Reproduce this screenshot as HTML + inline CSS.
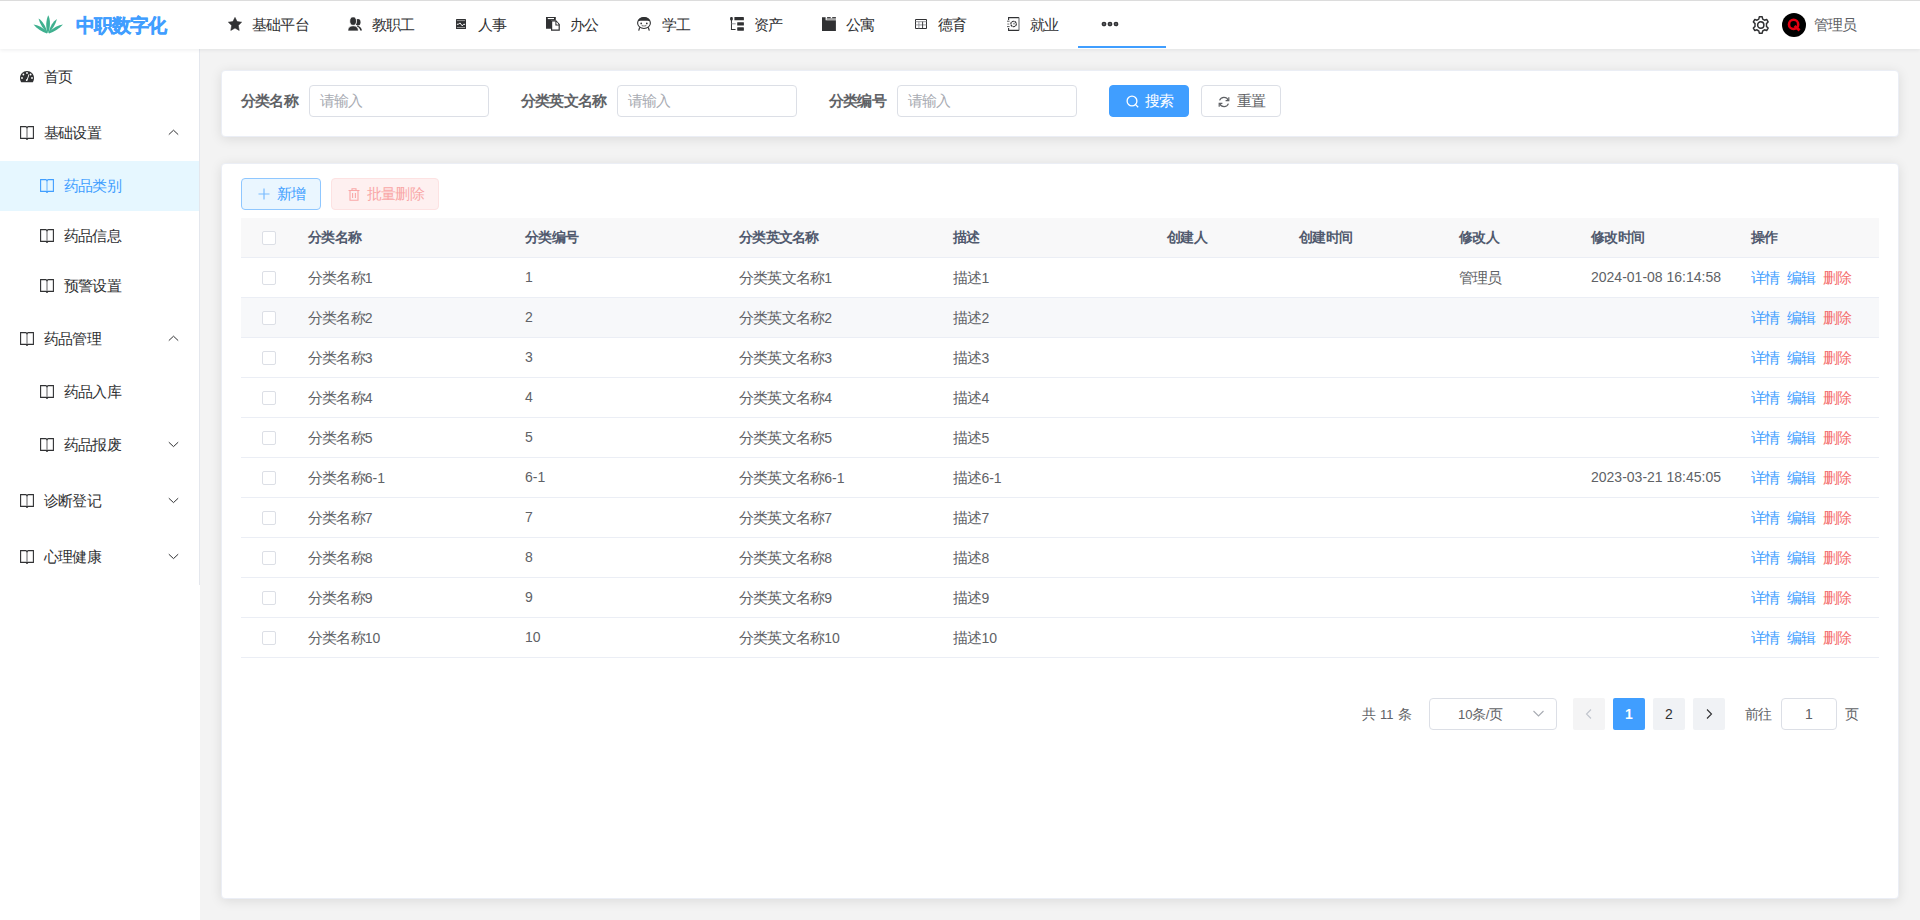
<!DOCTYPE html>
<html><head><meta charset="utf-8"><style>
*{box-sizing:border-box;margin:0;padding:0}
html,body{width:1920px;height:920px;overflow:hidden}
body{font-family:"Liberation Sans",sans-serif;font-size:14px;color:#606266;background:#f3f3f3;position:relative}
.abs{position:absolute}
#topline{left:0;top:0;width:1920px;height:1px;background:#dcdcdc;z-index:4}
#header{left:0;top:0;width:1920px;height:49px;background:#fff;box-shadow:0 1px 4px rgba(0,21,41,.08);z-index:3}
#logo-t{left:76px;top:15px;font-size:18px;font-weight:bold;-webkit-text-stroke:0.35px #409eff;color:#409eff;line-height:22px;white-space:nowrap}
.navt{position:absolute;top:1px;height:48px;line-height:48px;color:#303133;white-space:nowrap}
#underline{left:1078px;top:46px;width:88px;height:2px;background:#409eff}
#sidebg{left:0;top:49px;width:200px;height:871px;background:#fff;z-index:1}
#side{left:0;top:49px;width:200px;height:536px;background:#fff;border-right:1px solid #e4e7ed;z-index:2}
.mi{position:absolute;left:0;width:199px}
.mt{position:absolute;top:0;white-space:nowrap}
.card{position:absolute;background:#fff;border-radius:4px;border:1px solid #ebeef5;box-shadow:0 2px 12px 0 rgba(0,0,0,.1)}
.lbl{position:absolute;font-weight:bold;color:#606266;line-height:32px;white-space:nowrap}
.inp{position:absolute;height:32px;width:180px;border:1px solid #dcdfe6;border-radius:4px;background:#fff;color:#a8abb2;line-height:30px;padding-left:10px;white-space:nowrap}
.btn{position:absolute;height:32px;border-radius:4px;line-height:30px;white-space:nowrap;border:1px solid #dcdfe6}
.cb{position:absolute;width:14px;height:14px;border:1px solid #dcdfe6;border-radius:2px;background:#fff}
.th{position:absolute;height:40px;line-height:39px;font-size:13px;font-weight:bold;color:#515a6e;white-space:nowrap}
.td{position:absolute;height:40px;line-height:39px;color:#606266;white-space:nowrap}
.pt{position:absolute;height:32px;line-height:33px;font-size:13px;white-space:nowrap;color:#606266}
.pb{position:absolute;width:32px;height:32px;line-height:32px;border-radius:2px;text-align:center;color:#606266}

.c{font-size:1.0715em;letter-spacing:-0.0536em}

</style></head><body>
<div id="topline" class="abs"></div>
<div id="header" class="abs">
<svg class="abs" style="left:33px;top:14px" width="31" height="20" viewBox="0 0 31 20">
<g fill="#3fb08f">
<path d="M14.5 18.5 C12.5 13 13 6 15.2 1.2 C17.5 5 17.5 12 15.5 18.5 Z"/>
<path d="M13.8 18.8 C10.5 15 7 10.5 5.5 4.5 C9.5 7 12.5 12 14.5 18.5 Z"/>
<path d="M16.2 18.8 C19.5 15 22.5 10.5 24 5 C20 7.5 17.2 12 15.6 18.5 Z"/>
<path d="M14 19.5 C9 17.5 4 15 0.5 10.5 C5 10.8 10 13.5 14.6 18.6 Z"/>
<path d="M16 19.5 C21 17.5 26 15 30 10.5 C25.5 10.8 20.5 13.5 15.5 18.6 Z"/>
</g></svg>
<div id="logo-t" class="abs"><span class="c">中职数字化</span></div>
<div class="abs" style="left:228px;top:17px;line-height:0"><svg width="14" height="14" viewBox="0 0 14 14"><path fill="#303133" stroke="#303133" stroke-width="0.6" stroke-linejoin="round" d="M7 0.4 L9.1 4.6 L13.6 5.2 L10.3 8.4 L11.2 13.4 L7 11 L2.8 13.4 L3.7 8.4 L0.4 5.2 L4.9 4.6 Z"/></svg></div>
<div class="navt" style="left:252px"><span class="c">基础平台</span></div>
<div class="abs" style="left:348px;top:17px;line-height:0"><svg width="14" height="14" viewBox="0 0 14 14"><g fill="#303133"><ellipse cx="10" cy="5.3" rx="2.5" ry="3.2"/><path d="M9.2 8.6 C11.8 9.2 13.6 11 14 13.6 L12.2 13.6 C11.8 11.6 10.6 10.2 8.8 9.6 Z"/></g><g fill="#303133" stroke="#fff" stroke-width="0.9"><ellipse cx="5.1" cy="4.1" rx="3.4" ry="4.3"/><path d="M-0.3 14.1 C-0.3 10.6 1.6 8.7 5.1 8.7 C8.6 8.7 10.5 10.6 10.5 14.1 Z"/></g></svg></div>
<div class="navt" style="left:372px"><span class="c">教职工</span></div>
<div class="abs" style="left:456px;top:19px;line-height:0"><svg width="10" height="10" viewBox="0 0 10 10"><rect x="0" y="0" width="10" height="10" rx="0.6" fill="#303133"/><path d="M0.9 1.6 H9.1 M0.9 8.5 H9.1" stroke="#b0b0b0" stroke-width="0.8"/><polyline points="0.9,5.3 2.6,5.2 3.9,3.9 6.3,6.9 7.5,5.3 9.1,5.3" stroke="#fff" stroke-width="1" fill="none"/></svg></div>
<div class="navt" style="left:478px"><span class="c">人事</span></div>
<div class="abs" style="left:546px;top:17px;line-height:0"><svg width="14" height="14" viewBox="0 0 14 14"><path fill="#303133" d="M0 0 H9.8 V3.2 H5 V11.8 H0 Z"/><rect x="1.8" y="1" width="6.2" height="1.1" fill="#fff"/><path d="M5.6 3.9 H9.9 L13.2 7.4 V13.2 H5.6 Z" fill="#fff" stroke="#303133" stroke-width="1.2" stroke-linejoin="miter"/><path d="M10 3.9 V8 H13.2" fill="none" stroke="#303133" stroke-width="1.2"/><path d="M10.6 4.8 L12.4 7.2 H10.6 Z" fill="#fff"/></svg></div>
<div class="navt" style="left:570px"><span class="c">办公</span></div>
<div class="abs" style="left:637px;top:17px;line-height:0"><svg width="14" height="14" viewBox="0 0 14 14"><ellipse cx="7" cy="6" rx="6.4" ry="5.5" fill="none" stroke="#303133" stroke-width="1.1"/><path d="M0.9 4.2 C1.6 1.4 4 0.3 7 0.3 C10 0.3 12.4 1.4 13.1 4.2 C10.5 3.7 3.5 3.7 0.9 4.2 Z" fill="#303133"/><circle cx="4.2" cy="6.4" r="0.85" fill="#303133"/><circle cx="9.8" cy="6.4" r="0.85" fill="#303133"/><path d="M4.7 8.2 Q7 9.8 9.3 8.2" fill="none" stroke="#8a8a8a" stroke-width="1.1"/><path d="M2.7 10.4 L1.7 13.6 M11.3 10.4 L12.3 13.6" stroke="#303133" stroke-width="1.2"/></svg></div>
<div class="navt" style="left:662px"><span class="c">学工</span></div>
<div class="abs" style="left:730px;top:17px;line-height:0"><svg width="14" height="14" viewBox="0 0 14 14"><g fill="#303133"><rect x="0.1" y="0" width="2.7" height="3.5" rx="1"/><rect x="0.95" y="3" width="1" height="9.9"/><rect x="0.95" y="12" width="4.6" height="1"/><rect x="4.4" y="0" width="9.5" height="3.3" rx="0.4"/><rect x="7.2" y="5.2" width="6.7" height="3.4" rx="0.4"/><rect x="7.2" y="10.3" width="6.7" height="3.4" rx="0.4"/></g><rect x="1.5" y="6.3" width="4.2" height="1" fill="#909399"/></svg></div>
<div class="navt" style="left:754px"><span class="c">资产</span></div>
<div class="abs" style="left:822px;top:17px;line-height:0"><svg width="14" height="14" viewBox="0 0 14 14"><path fill="#303133" d="M0 0.2 H3.6 V3.2 H13.9 V13.9 H0 Z"/><rect x="4.6" y="1.1" width="9.3" height="2.1" fill="#a6a6a6"/><rect x="5.1" y="0.1" width="3.6" height="1.1" fill="#303133"/><rect x="10.2" y="0.1" width="3.7" height="1.1" fill="#303133"/></svg></div>
<div class="navt" style="left:846px"><span class="c">公寓</span></div>
<div class="abs" style="left:915px;top:19px;line-height:0"><svg width="12" height="10" viewBox="0 0 12 10"><path fill="none" stroke="#303133" stroke-width="1" d="M0.5 0.5 H11.5 V9.5 H0.5 Z"/><path stroke="#8d8f94" stroke-width="0.9" d="M0.5 2.7 H11.5 M0.5 5.9 H11.5 M3.9 2.7 V9.5"/><path stroke="#303133" stroke-width="0.9" d="M7.6 2.7 V9.5"/></svg></div>
<div class="navt" style="left:938px"><span class="c">德育</span></div>
<div class="abs" style="left:1007px;top:17px;line-height:0"><svg width="13" height="14" viewBox="0 0 13 14"><path d="M1.6 3 V0.6 H12 M12 13.4 H1.6 V11" fill="none" stroke="#303133" stroke-width="1.1"/><path d="M12 0.6 V13.4" stroke="#6b6d71" stroke-width="1.1"/><path d="M0 4.2 H2.6 M0 9.6 H2.6" stroke="#58595c" stroke-width="1"/><path d="M0.3 7.1 H2.3" stroke="#9a9a9a" stroke-width="1.4"/><circle cx="6.6" cy="7" r="2.75" fill="none" stroke="#303133" stroke-width="1.15" stroke-dasharray="2.2 0.5"/><circle cx="7" cy="6.7" r="0.9" fill="#8d8f94"/></svg></div>
<div class="navt" style="left:1030px"><span class="c">就业</span></div>
<svg class="abs" style="left:1101px;top:21px" width="18" height="6" viewBox="0 0 18 6"><g fill="#606266" stroke="#303133" stroke-width="1.3"><circle cx="3" cy="3" r="1.7"/><circle cx="9" cy="3" r="1.7"/><circle cx="15" cy="3" r="1.7"/></g></svg>
<div id="underline" class="abs"></div>
<svg class="abs" style="left:1751px;top:15px" width="19.5" height="20" viewBox="0 0 24 24" preserveAspectRatio="none"><path fill="none" stroke="#303133" stroke-width="1.8" stroke-linejoin="round" d="M10.2 2.2 H13.8 L14.4 5 C15.2 5.3 15.9 5.7 16.6 6.2 L19.3 5.3 L21.1 8.4 L19 10.3 C19.1 11.1 19.1 12.9 19 13.7 L21.1 15.6 L19.3 18.7 L16.6 17.8 C15.9 18.3 15.2 18.7 14.4 19 L13.8 21.8 H10.2 L9.6 19 C8.8 18.7 8.1 18.3 7.4 17.8 L4.7 18.7 L2.9 15.6 L5 13.7 C4.9 12.9 4.9 11.1 5 10.3 L2.9 8.4 L4.7 5.3 L7.4 6.2 C8.1 5.7 8.8 5.3 9.6 5 Z"/><circle cx="12" cy="12" r="3.9" fill="none" stroke="#303133" stroke-width="1.8"/></svg>
<svg class="abs" style="left:1782px;top:13px" width="24" height="24" viewBox="0 0 24 24"><circle cx="12" cy="12" r="12" fill="#000"/><circle cx="11.6" cy="11.4" r="4.6" fill="none" stroke="#e60012" stroke-width="2.6"/><path d="M12.5 13 L17.6 17.4" stroke="#e60012" stroke-width="2.8"/></svg>
<div class="navt" style="left:1814px;color:#606266"><span class="c">管理员</span></div>
</div>
<div id="sidebg" class="abs"></div>
<div id="side" class="abs">
<div class="mi" style="top:0px;height:56px;">
<div class="abs" style="left:20px;top:22px;line-height:0"><svg width="14" height="12" viewBox="0 0 14 12"><path fill="#303133" d="M7 0 C10.9 0 14 3.1 14 7 C14 8.6 13.6 10.2 12.8 11.2 L1.2 11.2 C0.4 10.2 0 8.6 0 7 C0 3.1 3.1 0 7 0 Z"/><g fill="#fff"><circle cx="7" cy="2" r="0.9"/><circle cx="3.4" cy="3.5" r="0.9"/><circle cx="10.6" cy="3.5" r="0.9"/><circle cx="2" cy="7" r="0.9"/><circle cx="12" cy="7" r="0.9"/><path d="M8.6 3.2 L9.4 3.6 L7.8 8.6 C7.9 9.4 7.4 10 6.8 10 C6.2 10 5.8 9.5 5.9 8.9 C6 8.4 6.5 8 7 8 Z"/></g></svg></div>
<div class="mt" style="left:44px;line-height:56px;color:#303133"><span class="c">首页</span></div>
</div>
<div class="mi" style="top:56px;height:56px;">
<div class="abs" style="left:20px;top:21px;line-height:0"><svg width="14" height="14" viewBox="0 0 14 14"><path fill="none" stroke="#303133" stroke-width="1.1" d="M5.8 0.6 H0.6 V12.4 H5.8 Q6.6 12.5 6.8 13.2 M8.2 0.6 H13.4 V12.4 H8.2 Q7.4 12.5 7.2 13.2 M5.8 0.6 Q6.6 0.7 6.8 1.5 M8.2 0.6 Q7.4 0.7 7.2 1.5"/><rect x="6.3" y="1.5" width="1.4" height="11.6" fill="#303133" opacity="0.55"/><rect x="6.2" y="1.2" width="1.6" height="1" fill="#303133"/><rect x="6.2" y="12.8" width="1.6" height="1" fill="#303133"/></svg></div>
<div class="mt" style="left:44px;line-height:56px;color:#303133"><span class="c">基础设置</span></div>
<div class="abs" style="left:168px;top:24px;line-height:0"><svg width="11" height="7" viewBox="0 0 11 7"><path d="M0.8 5.6 L5.5 1.2 L10.2 5.6" fill="none" stroke="#303133" stroke-width="1"/></svg></div>
</div>
<div class="mi" style="top:112px;height:50px;background:#e6f7ff;">
<div class="abs" style="left:40px;top:18px;line-height:0"><svg width="14" height="14" viewBox="0 0 14 14"><path fill="none" stroke="#409eff" stroke-width="1.1" d="M5.8 0.6 H0.6 V12.4 H5.8 Q6.6 12.5 6.8 13.2 M8.2 0.6 H13.4 V12.4 H8.2 Q7.4 12.5 7.2 13.2 M5.8 0.6 Q6.6 0.7 6.8 1.5 M8.2 0.6 Q7.4 0.7 7.2 1.5"/><rect x="6.3" y="1.5" width="1.4" height="11.6" fill="#409eff" opacity="0.55"/><rect x="6.2" y="1.2" width="1.6" height="1" fill="#409eff"/><rect x="6.2" y="12.8" width="1.6" height="1" fill="#409eff"/></svg></div>
<div class="mt" style="left:64px;line-height:50px;color:#409eff"><span class="c">药品类别</span></div>
</div>
<div class="mi" style="top:162px;height:50px;">
<div class="abs" style="left:40px;top:18px;line-height:0"><svg width="14" height="14" viewBox="0 0 14 14"><path fill="none" stroke="#303133" stroke-width="1.1" d="M5.8 0.6 H0.6 V12.4 H5.8 Q6.6 12.5 6.8 13.2 M8.2 0.6 H13.4 V12.4 H8.2 Q7.4 12.5 7.2 13.2 M5.8 0.6 Q6.6 0.7 6.8 1.5 M8.2 0.6 Q7.4 0.7 7.2 1.5"/><rect x="6.3" y="1.5" width="1.4" height="11.6" fill="#303133" opacity="0.55"/><rect x="6.2" y="1.2" width="1.6" height="1" fill="#303133"/><rect x="6.2" y="12.8" width="1.6" height="1" fill="#303133"/></svg></div>
<div class="mt" style="left:64px;line-height:50px;color:#303133"><span class="c">药品信息</span></div>
</div>
<div class="mi" style="top:212px;height:50px;">
<div class="abs" style="left:40px;top:18px;line-height:0"><svg width="14" height="14" viewBox="0 0 14 14"><path fill="none" stroke="#303133" stroke-width="1.1" d="M5.8 0.6 H0.6 V12.4 H5.8 Q6.6 12.5 6.8 13.2 M8.2 0.6 H13.4 V12.4 H8.2 Q7.4 12.5 7.2 13.2 M5.8 0.6 Q6.6 0.7 6.8 1.5 M8.2 0.6 Q7.4 0.7 7.2 1.5"/><rect x="6.3" y="1.5" width="1.4" height="11.6" fill="#303133" opacity="0.55"/><rect x="6.2" y="1.2" width="1.6" height="1" fill="#303133"/><rect x="6.2" y="12.8" width="1.6" height="1" fill="#303133"/></svg></div>
<div class="mt" style="left:64px;line-height:50px;color:#303133"><span class="c">预警设置</span></div>
</div>
<div class="mi" style="top:262px;height:56px;">
<div class="abs" style="left:20px;top:21px;line-height:0"><svg width="14" height="14" viewBox="0 0 14 14"><path fill="none" stroke="#303133" stroke-width="1.1" d="M5.8 0.6 H0.6 V12.4 H5.8 Q6.6 12.5 6.8 13.2 M8.2 0.6 H13.4 V12.4 H8.2 Q7.4 12.5 7.2 13.2 M5.8 0.6 Q6.6 0.7 6.8 1.5 M8.2 0.6 Q7.4 0.7 7.2 1.5"/><rect x="6.3" y="1.5" width="1.4" height="11.6" fill="#303133" opacity="0.55"/><rect x="6.2" y="1.2" width="1.6" height="1" fill="#303133"/><rect x="6.2" y="12.8" width="1.6" height="1" fill="#303133"/></svg></div>
<div class="mt" style="left:44px;line-height:56px;color:#303133"><span class="c">药品管理</span></div>
<div class="abs" style="left:168px;top:24px;line-height:0"><svg width="11" height="7" viewBox="0 0 11 7"><path d="M0.8 5.6 L5.5 1.2 L10.2 5.6" fill="none" stroke="#303133" stroke-width="1"/></svg></div>
</div>
<div class="mi" style="top:318px;height:50px;">
<div class="abs" style="left:40px;top:18px;line-height:0"><svg width="14" height="14" viewBox="0 0 14 14"><path fill="none" stroke="#303133" stroke-width="1.1" d="M5.8 0.6 H0.6 V12.4 H5.8 Q6.6 12.5 6.8 13.2 M8.2 0.6 H13.4 V12.4 H8.2 Q7.4 12.5 7.2 13.2 M5.8 0.6 Q6.6 0.7 6.8 1.5 M8.2 0.6 Q7.4 0.7 7.2 1.5"/><rect x="6.3" y="1.5" width="1.4" height="11.6" fill="#303133" opacity="0.55"/><rect x="6.2" y="1.2" width="1.6" height="1" fill="#303133"/><rect x="6.2" y="12.8" width="1.6" height="1" fill="#303133"/></svg></div>
<div class="mt" style="left:64px;line-height:50px;color:#303133"><span class="c">药品入库</span></div>
</div>
<div class="mi" style="top:368px;height:56px;">
<div class="abs" style="left:40px;top:21px;line-height:0"><svg width="14" height="14" viewBox="0 0 14 14"><path fill="none" stroke="#303133" stroke-width="1.1" d="M5.8 0.6 H0.6 V12.4 H5.8 Q6.6 12.5 6.8 13.2 M8.2 0.6 H13.4 V12.4 H8.2 Q7.4 12.5 7.2 13.2 M5.8 0.6 Q6.6 0.7 6.8 1.5 M8.2 0.6 Q7.4 0.7 7.2 1.5"/><rect x="6.3" y="1.5" width="1.4" height="11.6" fill="#303133" opacity="0.55"/><rect x="6.2" y="1.2" width="1.6" height="1" fill="#303133"/><rect x="6.2" y="12.8" width="1.6" height="1" fill="#303133"/></svg></div>
<div class="mt" style="left:64px;line-height:56px;color:#303133"><span class="c">药品报废</span></div>
<div class="abs" style="left:168px;top:24px;line-height:0"><svg width="11" height="7" viewBox="0 0 11 7"><path d="M0.8 1.2 L5.5 5.6 L10.2 1.2" fill="none" stroke="#303133" stroke-width="1"/></svg></div>
</div>
<div class="mi" style="top:424px;height:56px;">
<div class="abs" style="left:20px;top:21px;line-height:0"><svg width="14" height="14" viewBox="0 0 14 14"><path fill="none" stroke="#303133" stroke-width="1.1" d="M5.8 0.6 H0.6 V12.4 H5.8 Q6.6 12.5 6.8 13.2 M8.2 0.6 H13.4 V12.4 H8.2 Q7.4 12.5 7.2 13.2 M5.8 0.6 Q6.6 0.7 6.8 1.5 M8.2 0.6 Q7.4 0.7 7.2 1.5"/><rect x="6.3" y="1.5" width="1.4" height="11.6" fill="#303133" opacity="0.55"/><rect x="6.2" y="1.2" width="1.6" height="1" fill="#303133"/><rect x="6.2" y="12.8" width="1.6" height="1" fill="#303133"/></svg></div>
<div class="mt" style="left:44px;line-height:56px;color:#303133"><span class="c">诊断登记</span></div>
<div class="abs" style="left:168px;top:24px;line-height:0"><svg width="11" height="7" viewBox="0 0 11 7"><path d="M0.8 1.2 L5.5 5.6 L10.2 1.2" fill="none" stroke="#303133" stroke-width="1"/></svg></div>
</div>
<div class="mi" style="top:480px;height:56px;">
<div class="abs" style="left:20px;top:21px;line-height:0"><svg width="14" height="14" viewBox="0 0 14 14"><path fill="none" stroke="#303133" stroke-width="1.1" d="M5.8 0.6 H0.6 V12.4 H5.8 Q6.6 12.5 6.8 13.2 M8.2 0.6 H13.4 V12.4 H8.2 Q7.4 12.5 7.2 13.2 M5.8 0.6 Q6.6 0.7 6.8 1.5 M8.2 0.6 Q7.4 0.7 7.2 1.5"/><rect x="6.3" y="1.5" width="1.4" height="11.6" fill="#303133" opacity="0.55"/><rect x="6.2" y="1.2" width="1.6" height="1" fill="#303133"/><rect x="6.2" y="12.8" width="1.6" height="1" fill="#303133"/></svg></div>
<div class="mt" style="left:44px;line-height:56px;color:#303133"><span class="c">心理健康</span></div>
<div class="abs" style="left:168px;top:24px;line-height:0"><svg width="11" height="7" viewBox="0 0 11 7"><path d="M0.8 1.2 L5.5 5.6 L10.2 1.2" fill="none" stroke="#303133" stroke-width="1"/></svg></div>
</div>
</div>
<div class="card" style="left:221px;top:70px;width:1678px;height:67px"></div>
<div class="lbl" style="left:241px;top:85px"><span class="c">分类名称</span></div>
<div class="inp" style="left:309px;top:85px"><span class="c">请输入</span></div>
<div class="lbl" style="left:521px;top:85px"><span class="c">分类英文名称</span></div>
<div class="inp" style="left:617px;top:85px"><span class="c">请输入</span></div>
<div class="lbl" style="left:829px;top:85px"><span class="c">分类编号</span></div>
<div class="inp" style="left:897px;top:85px"><span class="c">请输入</span></div>
<div class="btn" style="left:1109px;top:85px;width:80px;background:#409eff;border-color:#409eff;color:#fff">
<svg class="abs" style="left:16px;top:9px" width="13" height="13" viewBox="0 0 13 13"><circle cx="6" cy="6" r="4.9" fill="none" stroke="#fff" stroke-width="1.3"/><path d="M9.6 9.6 L12.2 12.2" stroke="#fff" stroke-width="1.3"/></svg>
<span class="abs" style="left:35px;top:0"><span class="c">搜索</span></span></div>
<div class="btn" style="left:1201px;top:85px;width:80px;background:#fff;color:#606266">
<svg class="abs" style="left:16px;top:10px" width="12" height="12" viewBox="0 0 12 12"><path d="M10.2 4.2 A4.6 4.6 0 0 0 1.6 4.4 M1.8 7.8 A4.6 4.6 0 0 0 10.4 7.6" fill="none" stroke="#606266" stroke-width="1.2"/><path d="M10.8 1.2 V4.6 H7.6 M1.2 10.8 V7.4 H4.4" fill="none" stroke="#606266" stroke-width="1.2"/></svg>
<span class="abs" style="left:35px;top:0"><span class="c">重置</span></span></div>
<div class="card" style="left:221px;top:163px;width:1678px;height:736px"></div>
<div class="btn" style="left:241px;top:178px;width:80px;background:#eaf6ff;border-color:#8fc7ff;color:#409eff">
<svg class="abs" style="left:16px;top:9px" width="12" height="12" viewBox="0 0 12 12"><path d="M6 0.5 V11.5 M0.5 6 H11.5" stroke="#79bbff" stroke-width="1.2"/></svg>
<span class="abs" style="left:35px;top:0"><span class="c">新增</span></span></div>
<div class="btn" style="left:331px;top:178px;width:108px;background:#fef0f0;border-color:#fde2e2;color:#f9a7a7">
<svg class="abs" style="left:16px;top:9px" width="12" height="13" viewBox="0 0 12 13"><path d="M0.5 2.5 H11.5 M4 2.5 V0.8 H8 V2.5 M2 2.5 V12.3 H10 V2.5 M4.6 5 V10 M7.4 5 V10" fill="none" stroke="#f9a7a7" stroke-width="1.1"/></svg>
<span class="abs" style="left:35px;top:0"><span class="c">批量删除</span></span></div>
<div class="abs" style="left:241px;top:218px;width:1638px;height:40px;background:#f8f8f9;border-bottom:1px solid #ebeef5"></div>
<div class="cb" style="left:262px;top:231px"></div>
<div class="th" style="left:308px;top:218px"><span class="c">分类名称</span></div>
<div class="th" style="left:525px;top:218px"><span class="c">分类编号</span></div>
<div class="th" style="left:739px;top:218px"><span class="c">分类英文名称</span></div>
<div class="th" style="left:953px;top:218px"><span class="c">描述</span></div>
<div class="th" style="left:1167px;top:218px"><span class="c">创建人</span></div>
<div class="th" style="left:1299px;top:218px"><span class="c">创建时间</span></div>
<div class="th" style="left:1459px;top:218px"><span class="c">修改人</span></div>
<div class="th" style="left:1591px;top:218px"><span class="c">修改时间</span></div>
<div class="th" style="left:1751px;top:218px"><span class="c">操作</span></div>
<div class="abs" style="left:241px;top:258px;width:1638px;height:40px;background:#fff;border-bottom:1px solid #ebeef5"></div>
<div class="cb" style="left:262px;top:271px"></div>
<div class="td" style="left:308px;top:258px"><span class="c">分类名称</span>1</div>
<div class="td" style="left:525px;top:258px">1</div>
<div class="td" style="left:739px;top:258px"><span class="c">分类英文名称</span>1</div>
<div class="td" style="left:953px;top:258px"><span class="c">描述</span>1</div>
<div class="td" style="left:1459px;top:258px"><span class="c">管理员</span></div>
<div class="td" style="left:1591px;top:258px">2024-01-08 16:14:58</div>
<div class="td" style="left:1751px;top:258px;color:#409eff"><span class="c">详情</span></div><div class="td" style="left:1787px;top:258px;color:#409eff"><span class="c">编辑</span></div><div class="td" style="left:1823px;top:258px;color:#f56c6c"><span class="c">删除</span></div>
<div class="abs" style="left:241px;top:298px;width:1638px;height:40px;background:#f7f8fa;border-bottom:1px solid #ebeef5"></div>
<div class="cb" style="left:262px;top:311px"></div>
<div class="td" style="left:308px;top:298px"><span class="c">分类名称</span>2</div>
<div class="td" style="left:525px;top:298px">2</div>
<div class="td" style="left:739px;top:298px"><span class="c">分类英文名称</span>2</div>
<div class="td" style="left:953px;top:298px"><span class="c">描述</span>2</div>
<div class="td" style="left:1751px;top:298px;color:#409eff"><span class="c">详情</span></div><div class="td" style="left:1787px;top:298px;color:#409eff"><span class="c">编辑</span></div><div class="td" style="left:1823px;top:298px;color:#f56c6c"><span class="c">删除</span></div>
<div class="abs" style="left:241px;top:338px;width:1638px;height:40px;background:#fff;border-bottom:1px solid #ebeef5"></div>
<div class="cb" style="left:262px;top:351px"></div>
<div class="td" style="left:308px;top:338px"><span class="c">分类名称</span>3</div>
<div class="td" style="left:525px;top:338px">3</div>
<div class="td" style="left:739px;top:338px"><span class="c">分类英文名称</span>3</div>
<div class="td" style="left:953px;top:338px"><span class="c">描述</span>3</div>
<div class="td" style="left:1751px;top:338px;color:#409eff"><span class="c">详情</span></div><div class="td" style="left:1787px;top:338px;color:#409eff"><span class="c">编辑</span></div><div class="td" style="left:1823px;top:338px;color:#f56c6c"><span class="c">删除</span></div>
<div class="abs" style="left:241px;top:378px;width:1638px;height:40px;background:#fff;border-bottom:1px solid #ebeef5"></div>
<div class="cb" style="left:262px;top:391px"></div>
<div class="td" style="left:308px;top:378px"><span class="c">分类名称</span>4</div>
<div class="td" style="left:525px;top:378px">4</div>
<div class="td" style="left:739px;top:378px"><span class="c">分类英文名称</span>4</div>
<div class="td" style="left:953px;top:378px"><span class="c">描述</span>4</div>
<div class="td" style="left:1751px;top:378px;color:#409eff"><span class="c">详情</span></div><div class="td" style="left:1787px;top:378px;color:#409eff"><span class="c">编辑</span></div><div class="td" style="left:1823px;top:378px;color:#f56c6c"><span class="c">删除</span></div>
<div class="abs" style="left:241px;top:418px;width:1638px;height:40px;background:#fff;border-bottom:1px solid #ebeef5"></div>
<div class="cb" style="left:262px;top:431px"></div>
<div class="td" style="left:308px;top:418px"><span class="c">分类名称</span>5</div>
<div class="td" style="left:525px;top:418px">5</div>
<div class="td" style="left:739px;top:418px"><span class="c">分类英文名称</span>5</div>
<div class="td" style="left:953px;top:418px"><span class="c">描述</span>5</div>
<div class="td" style="left:1751px;top:418px;color:#409eff"><span class="c">详情</span></div><div class="td" style="left:1787px;top:418px;color:#409eff"><span class="c">编辑</span></div><div class="td" style="left:1823px;top:418px;color:#f56c6c"><span class="c">删除</span></div>
<div class="abs" style="left:241px;top:458px;width:1638px;height:40px;background:#fff;border-bottom:1px solid #ebeef5"></div>
<div class="cb" style="left:262px;top:471px"></div>
<div class="td" style="left:308px;top:458px"><span class="c">分类名称</span>6-1</div>
<div class="td" style="left:525px;top:458px">6-1</div>
<div class="td" style="left:739px;top:458px"><span class="c">分类英文名称</span>6-1</div>
<div class="td" style="left:953px;top:458px"><span class="c">描述</span>6-1</div>
<div class="td" style="left:1591px;top:458px">2023-03-21 18:45:05</div>
<div class="td" style="left:1751px;top:458px;color:#409eff"><span class="c">详情</span></div><div class="td" style="left:1787px;top:458px;color:#409eff"><span class="c">编辑</span></div><div class="td" style="left:1823px;top:458px;color:#f56c6c"><span class="c">删除</span></div>
<div class="abs" style="left:241px;top:498px;width:1638px;height:40px;background:#fff;border-bottom:1px solid #ebeef5"></div>
<div class="cb" style="left:262px;top:511px"></div>
<div class="td" style="left:308px;top:498px"><span class="c">分类名称</span>7</div>
<div class="td" style="left:525px;top:498px">7</div>
<div class="td" style="left:739px;top:498px"><span class="c">分类英文名称</span>7</div>
<div class="td" style="left:953px;top:498px"><span class="c">描述</span>7</div>
<div class="td" style="left:1751px;top:498px;color:#409eff"><span class="c">详情</span></div><div class="td" style="left:1787px;top:498px;color:#409eff"><span class="c">编辑</span></div><div class="td" style="left:1823px;top:498px;color:#f56c6c"><span class="c">删除</span></div>
<div class="abs" style="left:241px;top:538px;width:1638px;height:40px;background:#fff;border-bottom:1px solid #ebeef5"></div>
<div class="cb" style="left:262px;top:551px"></div>
<div class="td" style="left:308px;top:538px"><span class="c">分类名称</span>8</div>
<div class="td" style="left:525px;top:538px">8</div>
<div class="td" style="left:739px;top:538px"><span class="c">分类英文名称</span>8</div>
<div class="td" style="left:953px;top:538px"><span class="c">描述</span>8</div>
<div class="td" style="left:1751px;top:538px;color:#409eff"><span class="c">详情</span></div><div class="td" style="left:1787px;top:538px;color:#409eff"><span class="c">编辑</span></div><div class="td" style="left:1823px;top:538px;color:#f56c6c"><span class="c">删除</span></div>
<div class="abs" style="left:241px;top:578px;width:1638px;height:40px;background:#fff;border-bottom:1px solid #ebeef5"></div>
<div class="cb" style="left:262px;top:591px"></div>
<div class="td" style="left:308px;top:578px"><span class="c">分类名称</span>9</div>
<div class="td" style="left:525px;top:578px">9</div>
<div class="td" style="left:739px;top:578px"><span class="c">分类英文名称</span>9</div>
<div class="td" style="left:953px;top:578px"><span class="c">描述</span>9</div>
<div class="td" style="left:1751px;top:578px;color:#409eff"><span class="c">详情</span></div><div class="td" style="left:1787px;top:578px;color:#409eff"><span class="c">编辑</span></div><div class="td" style="left:1823px;top:578px;color:#f56c6c"><span class="c">删除</span></div>
<div class="abs" style="left:241px;top:618px;width:1638px;height:40px;background:#fff;border-bottom:1px solid #ebeef5"></div>
<div class="cb" style="left:262px;top:631px"></div>
<div class="td" style="left:308px;top:618px"><span class="c">分类名称</span>10</div>
<div class="td" style="left:525px;top:618px">10</div>
<div class="td" style="left:739px;top:618px"><span class="c">分类英文名称</span>10</div>
<div class="td" style="left:953px;top:618px"><span class="c">描述</span>10</div>
<div class="td" style="left:1751px;top:618px;color:#409eff"><span class="c">详情</span></div><div class="td" style="left:1787px;top:618px;color:#409eff"><span class="c">编辑</span></div><div class="td" style="left:1823px;top:618px;color:#f56c6c"><span class="c">删除</span></div>
<div class="pt" style="left:1362px;top:698px;word-spacing:1.2px"><span class="c">共</span> 11 <span class="c">条</span></div>
<div class="abs" style="left:1429px;top:698px;width:128px;height:32px;border:1px solid #dcdfe6;border-radius:4px;background:#fff"></div>
<div class="pt" style="left:1458px;top:698px;color:#606266">10<span class="c">条</span>/<span class="c">页</span></div>
<svg class="abs" style="left:1533px;top:710px" width="11" height="7" viewBox="0 0 11 7"><path d="M0.5 1 L5.5 6 L10.5 1" fill="none" stroke="#a8abb2" stroke-width="1.1"/></svg>
<div class="pb" style="left:1573px;top:698px;background:#f4f4f5"><svg class="abs" style="left:12px;top:11px" width="7" height="10" viewBox="0 0 7 10"><path d="M6 0.5 L1.5 5 L6 9.5" fill="none" stroke="#c0c4cc" stroke-width="1.1"/></svg></div>
<div class="pb" style="left:1613px;top:698px;background:#409eff;color:#fff;font-weight:bold">1</div>
<div class="pb" style="left:1653px;top:698px;background:#f0f2f5;color:#303133">2</div>
<div class="pb" style="left:1693px;top:698px;background:#f0f2f5"><svg class="abs" style="left:13px;top:11px" width="7" height="10" viewBox="0 0 7 10"><path d="M1 0.5 L5.5 5 L1 9.5" fill="none" stroke="#303133" stroke-width="1.1"/></svg></div>
<div class="pt" style="left:1745px;top:698px"><span class="c">前往</span></div>
<div class="abs" style="left:1781px;top:698px;width:56px;height:32px;border:1px solid #dcdfe6;border-radius:4px;background:#fff;text-align:center;line-height:30px;color:#606266">1</div>
<div class="pt" style="left:1845px;top:698px"><span class="c">页</span></div>
</body></html>
